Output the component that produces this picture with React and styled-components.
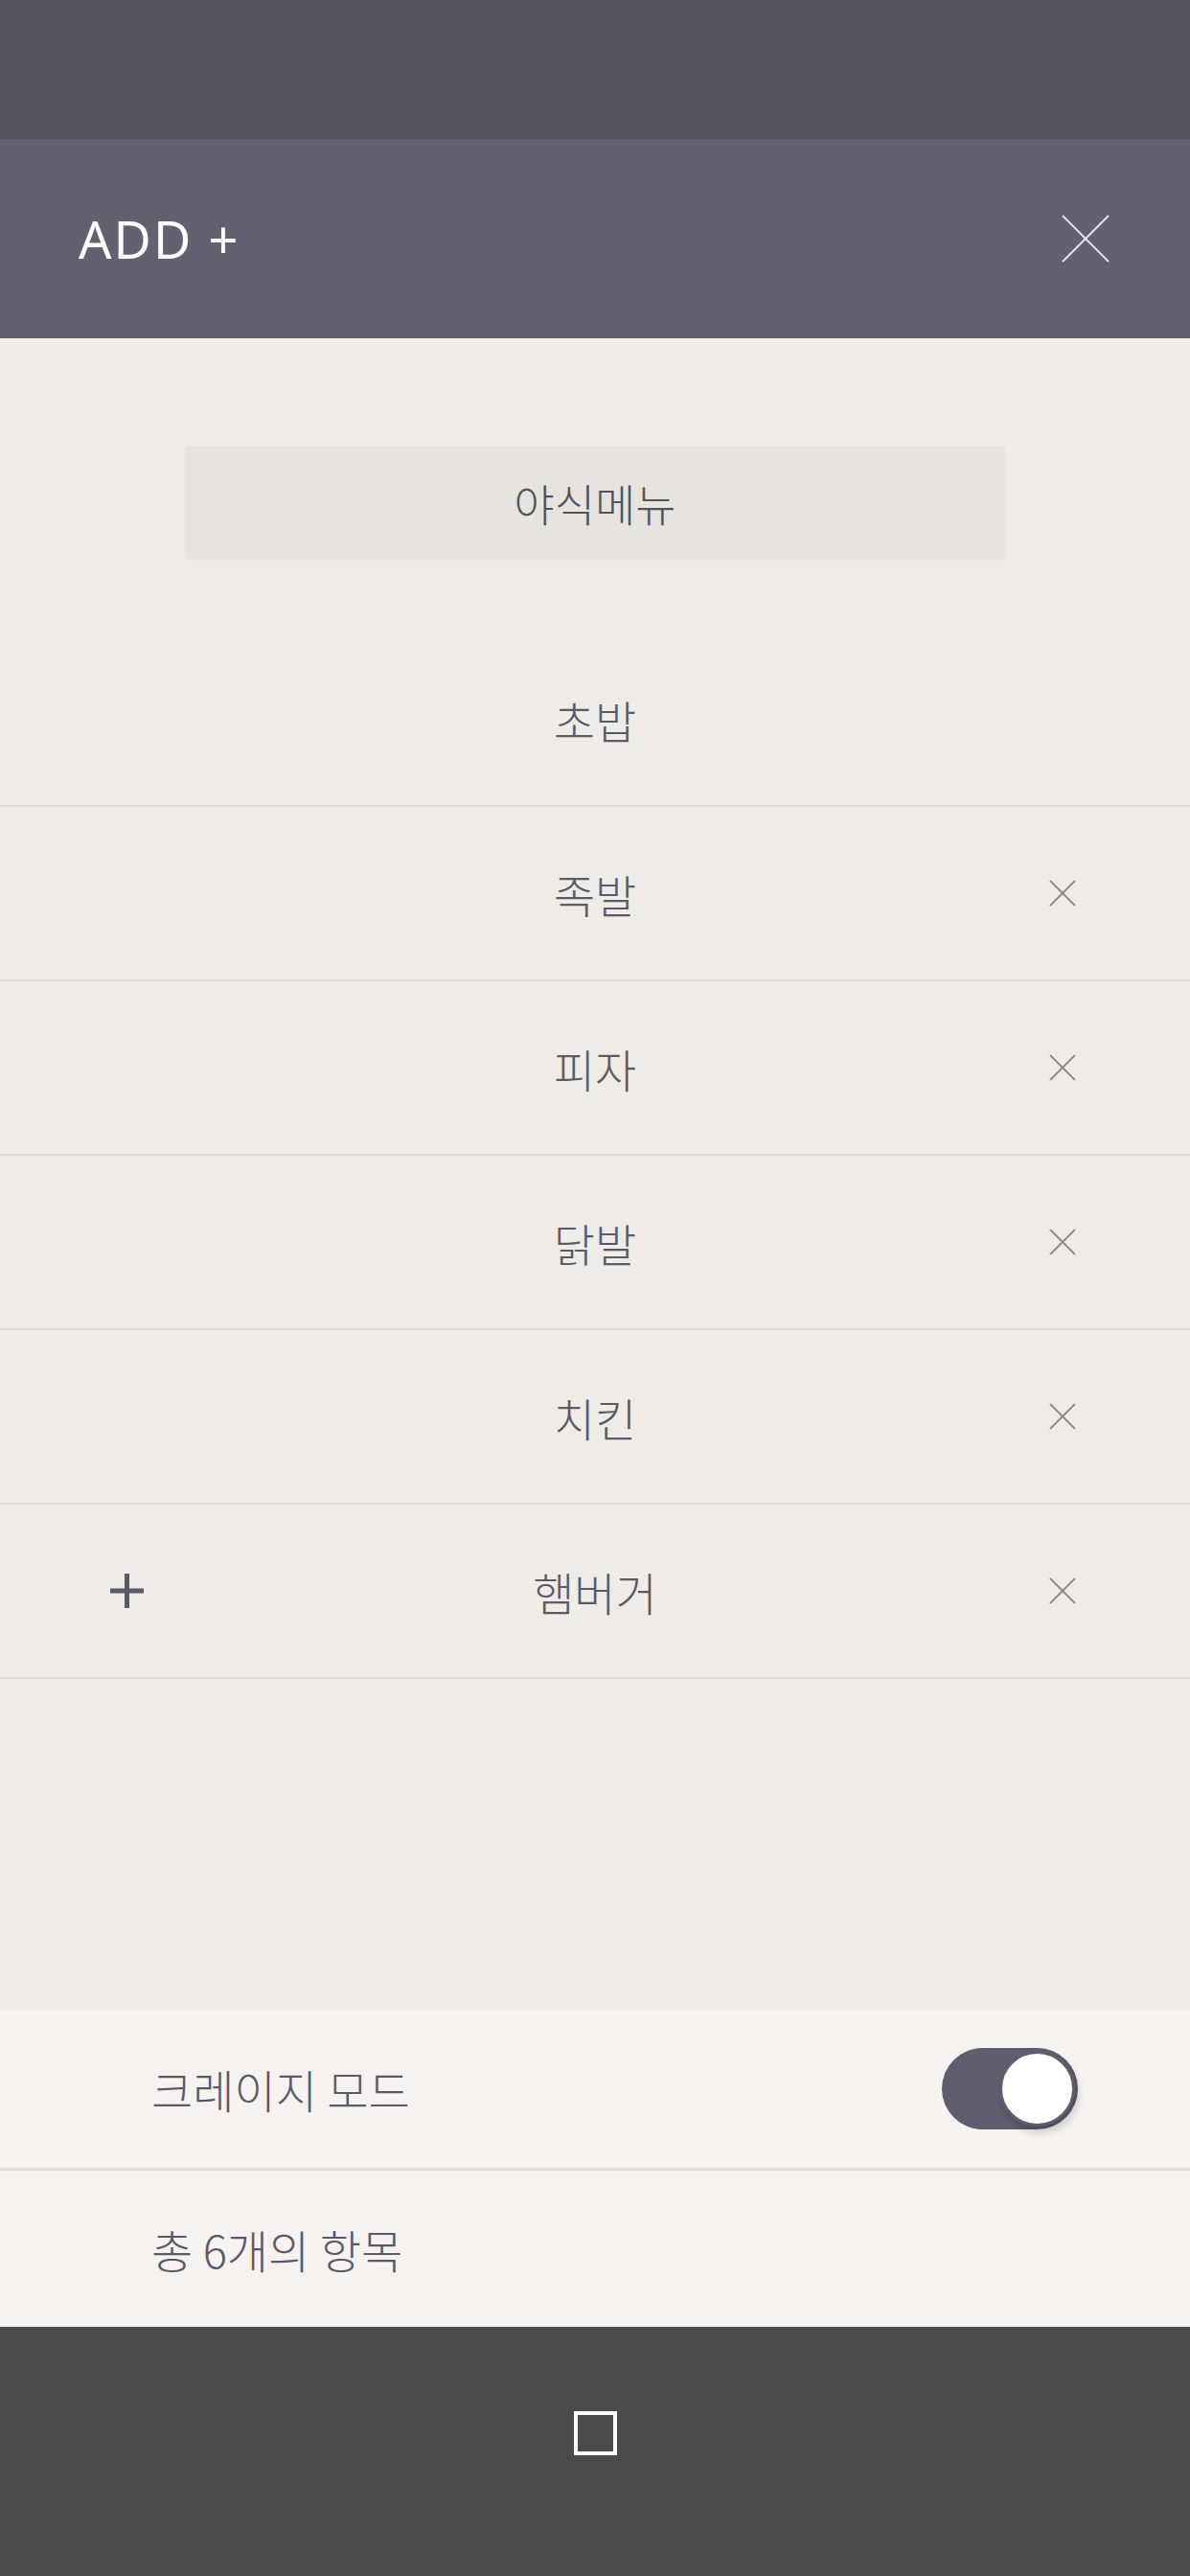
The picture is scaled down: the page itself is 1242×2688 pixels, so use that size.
import React from "react";
import styled, { createGlobalStyle } from "styled-components";

const GlobalStyle = createGlobalStyle`
  html, body { margin: 0; padding: 0; }
  body { background: #efebe6; font-family: "Noto Sans CJK KR", "Noto Sans", sans-serif; }
  * { box-sizing: border-box; }
`;

const Screen = styled.div`
  width: 1242px;
  height: 2688px;
  display: flex;
  flex-direction: column;
  background: #efebe6;
  overflow: hidden;
`;

const StatusBar = styled.div`
  height: 145px;
  flex-shrink: 0;
  background: #55545e;
`;

const Header = styled.header`
  height: 208px;
  flex-shrink: 0;
  background: #63616f;
  display: flex;
  align-items: center;
  justify-content: space-between;
  padding: 0 83px 0 82px;
`;

const Title = styled.h1`
  margin: 0;
  font-family: "Noto Sans", "Open Sans", sans-serif;
  font-weight: 400;
  font-size: 54px;
  letter-spacing: 2px;
  color: #ffffff;
  line-height: 1;
`;

const IconButton = styled.button`
  border: none;
  background: none;
  padding: 0;
  display: flex;
  align-items: center;
  justify-content: center;
  width: ${(p) => p.$size}px;
  height: ${(p) => p.$size}px;
  cursor: pointer;
`;

const Content = styled.main`
  flex: 1;
  display: flex;
  flex-direction: column;
  align-items: center;
  padding-top: 112px;
`;

const CategoryBox = styled.div`
  width: 856px;
  height: 117px;
  background: #e7e4df;
  border-radius: 3px;
  box-shadow: 0 2px 3px rgba(0, 0, 0, 0.04);
  display: flex;
  align-items: center;
  justify-content: center;
  font-size: 46px;
  font-weight: 300;
  color: #555357;
`;

const List = styled.ul`
  list-style: none;
  margin: 78px 0 0;
  padding: 0;
  width: 100%;
`;

const Row = styled.li`
  height: 182px;
  display: grid;
  grid-template-columns: 1fr auto 1fr;
  align-items: center;
  border-bottom: 2px solid #dedad4;
`;

const LeftSlot = styled.div`
  justify-self: start;
  padding-left: 115px;
  display: flex;
`;

const RightSlot = styled.div`
  justify-self: end;
  padding-right: 119px;
  display: flex;
`;

const ItemText = styled.span`
  font-size: 47px;
  font-weight: 300;
  color: #5b5968;
`;

const Footer = styled.section`
  flex-shrink: 0;
  background: #f5f2ef;
  display: flex;
  flex-direction: column;
`;

const FooterRow = styled.div`
  height: ${(p) => p.$h}px;
  display: flex;
  align-items: center;
  justify-content: space-between;
  padding: 0 117px 0 158px;
  border-bottom: ${(p) => (p.$divider ? "3px solid #e3dfda" : "none")};
`;

const FooterText = styled.span`
  font-size: 47px;
  font-weight: 300;
  color: #5b5968;
`;

const Track = styled.div`
  width: 142px;
  height: 85px;
  border-radius: 43px;
  background: #5f5d6e;
  display: flex;
  align-items: center;
  justify-content: ${(p) => (p.$on ? "flex-end" : "flex-start")};
  padding: 0 3px;
`;

const Knob = styled.div`
  width: 79px;
  height: 79px;
  border-radius: 50%;
  background: #ffffff;
  border: 3px solid #5f5d6e;
  box-shadow: 3px 6px 8px rgba(0, 0, 0, 0.18);
`;

const NavBar = styled.nav`
  height: 260px;
  flex-shrink: 0;
  background: #4a4a4a;
  display: flex;
  justify-content: center;
  padding-top: 88px;
`;

const HomeSquare = styled.div`
  width: 45px;
  height: 46px;
  border: 4px solid #ffffff;
`;

const CloseIcon = ({ size, color, width }) => (
  <svg width={size} height={size} viewBox={`0 0 ${size} ${size}`}>
    <line x1="1" y1="1" x2={size - 1} y2={size - 1} stroke={color} strokeWidth={width} />
    <line x1={size - 1} y1="1" x2="1" y2={size - 1} stroke={color} strokeWidth={width} />
  </svg>
);

const PlusIcon = () => (
  <svg width="35" height="36" viewBox="0 0 35 36">
    <line x1="17.5" y1="0" x2="17.5" y2="36" stroke="#5b5968" strokeWidth="5" />
    <line x1="0" y1="18" x2="35" y2="18" stroke="#5b5968" strokeWidth="5" />
  </svg>
);

const items = [
  { name: "초밥", removable: false },
  { name: "족발", removable: true },
  { name: "피자", removable: true },
  { name: "닭발", removable: true },
  { name: "치킨", removable: true },
  { name: "햄버거", removable: true, add: true },
];

export default function App() {
  return (
    <Screen>
      <GlobalStyle />
      <StatusBar />
      <Header>
        <Title>ADD +</Title>
        <IconButton $size={52}>
          <CloseIcon size={50} color="#e4e4e8" width={2} />
        </IconButton>
      </Header>
      <Content>
        <CategoryBox>야식메뉴</CategoryBox>
        <List>
          {items.map((it) => (
            <Row key={it.name}>
              <LeftSlot>{it.add && <PlusIcon />}</LeftSlot>
              <ItemText>{it.name}</ItemText>
              <RightSlot>
                {it.removable && <CloseIcon size={28} color="#8e8c8c" width={2} />}
              </RightSlot>
            </Row>
          ))}
        </List>
      </Content>
      <Footer>
        <FooterRow $h={168} $divider>
          <FooterText>크레이지 모드</FooterText>
          <Track $on>
            <Knob />
          </Track>
        </FooterRow>
        <FooterRow $h={163}>
          <FooterText>총 6개의 항목</FooterText>
        </FooterRow>
      </Footer>
      <NavBar>
        <HomeSquare />
      </NavBar>
    </Screen>
  );
}
